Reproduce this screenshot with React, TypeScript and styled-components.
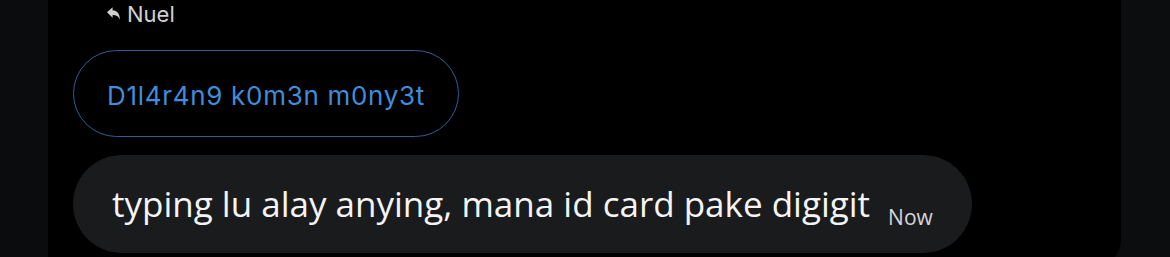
import { createGlobalStyle } from "styled-components";
import styled from "styled-components";

const GlobalStyle = createGlobalStyle`
  html, body {
    margin: 0;
    padding: 0;
    background: #0b0c0e;
  }
  body {
    font-family: "Open Sans", "Noto Sans", sans-serif;
  }
`;

const Screen = styled.div`
  display: flex;
  align-items: flex-start;
  width: 1170px;
  height: 257px;
  overflow: hidden;
  background: #0b0c0e;
`;

const SideStrip = styled.div<{ $width: number; $tone: string }>`
  flex: 0 0 ${({ $width }) => $width}px;
  align-self: stretch;
  background: ${({ $tone }) => $tone};
`;

const Thread = styled.div`
  flex: 1;
  height: 266px;
  background: #000;
  border-radius: 0 0 26px 0;
  padding: 0 0 0 25px;
  display: flex;
  flex-direction: column;
  align-items: flex-start;
`;

const ReplyLabel = styled.div`
  display: flex;
  align-items: center;
  gap: 7px;
  height: 28px;
  margin-left: 34px;
  color: #cfd0d2;
  font-family: Inter, "Liberation Sans", sans-serif;
  font-size: 22px;
  line-height: 1;
`;

const ReplyIcon = styled.svg`
  width: 13px;
  height: 13px;
  margin-top: -2px;
  fill: currentColor;
`;

const QuotedPill = styled.div`
  margin-top: 22px;
  height: 87px;
  box-sizing: border-box;
  padding: 4px 33px 0;
  display: flex;
  align-items: center;
  border: 1.5px solid #2c5f93;
  border-radius: 44px;
  color: #3f8ddb;
  font-family: Inter, "Liberation Sans", sans-serif;
  font-size: 26px;
  letter-spacing: 0.7px;
  line-height: 1;
`;

const Bubble = styled.div`
  margin-top: 18px;
  height: 98px;
  box-sizing: border-box;
  padding: 0 39px;
  display: flex;
  align-items: center;
  gap: 20px;
  background: #1a1b1d;
  border-radius: 49px;
  color: #f4f4f5;
`;

const BubbleText = styled.span`
  font-size: 35px;
  line-height: 1;
  margin-top: -2px;
`;

const Stamp = styled.span`
  margin-top: 26px;
  margin-left: -2px;
  font-size: 21px;
  line-height: 1;
  color: #d6d6d8;
`;

export default function App() {
  return (
    <Screen>
      <GlobalStyle />
      <SideStrip $width={48} $tone="#0b0c0e" />
      <Thread>
        <ReplyLabel>
          <ReplyIcon viewBox="0 0 13 13">
            <path d="M0 5.2 L5.6 0.2 V3.3 C10 3.5 12.6 6.6 13 12.6 C11.4 9.3 9.2 8 5.6 8 V10.8 Z" />
          </ReplyIcon>
          Nuel
        </ReplyLabel>
        <QuotedPill>D1l4r4n9 k0m3n m0ny3t</QuotedPill>
        <Bubble>
          <BubbleText>typing lu alay anying, mana id card pake digigit</BubbleText>
          <Stamp>Now</Stamp>
        </Bubble>
      </Thread>
      <SideStrip $width={49} $tone="#0b0d0f" />
    </Screen>
  );
}
